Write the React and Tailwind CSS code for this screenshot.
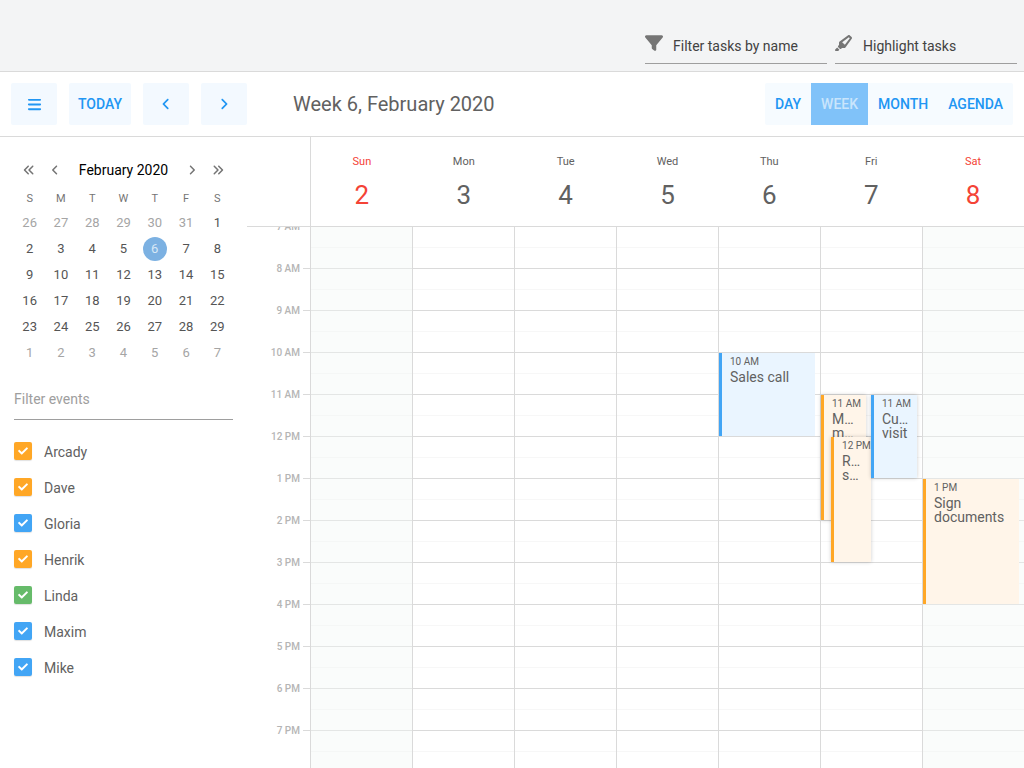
import React from "react";
import {
  FaFilter, FaHighlighter, FaBars, FaAngleLeft, FaAngleRight,
  FaAnglesLeft, FaAnglesRight,
} from "react-icons/fa6";
import { FaCheck } from "react-icons/fa";

const HOUR = 42;
const START = 7;
const HOURS = Array.from({ length: 14 }, (_, i) => START + i);

const DAYS = [
  { name: "Sun", date: 2, weekend: true, events: [] },
  { name: "Mon", date: 3, events: [] },
  { name: "Tue", date: 4, events: [] },
  { name: "Wed", date: 5, events: [] },
  {
    name: "Thu", date: 6,
    events: [{ time: "10 AM", lines: ["Sales call"], from: 10, to: 12, left: 0, width: 95, color: "blue" }],
  },
  {
    name: "Fri", date: 7,
    events: [
      { time: "11 AM", lines: ["Monthly", "meeting"], from: 11, to: 14, left: 0, width: 45, color: "orange", raised: true },
      { time: "12 PM", lines: ["Release", "summary"], from: 12, to: 15, left: 10, width: 40, color: "orange", raised: true },
      { time: "11 AM", lines: ["Customer", "visit"], from: 11, to: 13, left: 49.5, width: 45.5, color: "blue", raised: true },
    ],
  },
  {
    name: "Sat", date: 8, weekend: true,
    events: [{ time: "1 PM", lines: ["Sign", "documents"], from: 13, to: 16, left: 0, width: 95, color: "orange" }],
  },
];

const WEEKS = [
  [26, 27, 28, 29, 30, 31, 1],
  [2, 3, 4, 5, 6, 7, 8],
  [9, 10, 11, 12, 13, 14, 15],
  [16, 17, 18, 19, 20, 21, 22],
  [23, 24, 25, 26, 27, 28, 29],
  [1, 2, 3, 4, 5, 6, 7],
];

const PEOPLE = [
  ["Arcady", "bg-[#ffa726]"],
  ["Dave", "bg-[#ffa726]"],
  ["Gloria", "bg-[#42a5f5]"],
  ["Henrik", "bg-[#ffa726]"],
  ["Linda", "bg-[#66bb6a]"],
  ["Maxim", "bg-[#42a5f5]"],
  ["Mike", "bg-[#42a5f5]"],
];

const EVENT_COLORS = {
  blue: "border-[#42a5f5] bg-[#eaf5ff]",
  orange: "border-[#ffa726] bg-[#fff5e9]",
};

function hourLabel(h) {
  return h < 12 ? `${h} AM` : `${h === 12 ? 12 : h - 12} PM`;
}

function TopField({ icon, label }) {
  return (
    <label className="flex h-9 w-[182px] items-center gap-2 border-b border-[#9e9e9e]">
      <span className="w-5 shrink-0 pb-1.5 text-lg text-[#757575]">{icon}</span>
      <input
        type="text"
        aria-label={label}
        placeholder={label}
        className="w-full min-w-0 bg-transparent text-sm text-[#424242] outline-none placeholder:text-[#424242]"
      />
    </label>
  );
}

function ToolButton({ label, children }) {
  return (
    <button
      type="button"
      aria-label={label}
      className="flex h-[42px] w-[46px] items-center justify-center rounded-xs bg-[#f3f9ff] text-[#2196f3]"
    >
      {children}
    </button>
  );
}

function MiniCalendar() {
  return (
    <section className="px-3.5">
      <div className="flex h-6 items-center justify-between px-[9px] text-[#757575]">
        <div className="flex items-center gap-3.5">
          <button type="button" aria-label="Previous year"><FaAnglesLeft className="size-3" /></button>
          <button type="button" aria-label="Previous month"><FaAngleLeft className="size-3" /></button>
        </div>
        <h2 className="text-sm text-black">February 2020</h2>
        <div className="flex items-center gap-3.5">
          <button type="button" aria-label="Next month"><FaAngleRight className="size-3" /></button>
          <button type="button" aria-label="Next year"><FaAnglesRight className="size-3" /></button>
        </div>
      </div>
      <table className="mt-[7px] w-full table-fixed text-center text-[13px] text-[#555555]">
        <thead>
          <tr className="h-[21px] text-[11px] text-[#757575]">
            {["S", "M", "T", "W", "T", "F", "S"].map((d, i) => (
              <th key={i} className="font-normal">{d}</th>
            ))}
          </tr>
        </thead>
        <tbody>
          {WEEKS.map((week, w) => (
            <tr key={w} className="h-[26px]">
              {week.map((d, i) => {
                const other = (w === 0 && d > 7) || w === 5;
                const selected = w === 1 && d === 6;
                return (
                  <td key={i} className={other ? "p-0 text-[#a5a5a5]" : "p-0"}>
                    {selected ? (
                      <span className="mx-auto flex size-6 items-center justify-center rounded-full bg-[#7cb1e2] text-[#d8e8f6]">{d}</span>
                    ) : d}
                  </td>
                );
              })}
            </tr>
          ))}
        </tbody>
      </table>
    </section>
  );
}

function Sidebar() {
  return (
    <aside className="w-[247px] shrink-0 overflow-hidden pt-[21px]">
      <MiniCalendar />
      <div className="px-3.5">
        <input
          type="text"
          aria-label="Filter events"
          placeholder="Filter events"
          className="mt-3 h-[42px] w-full border-b border-[#9e9e9e] text-sm outline-none placeholder:text-[#9e9e9e]"
        />
        <ul className="mt-3.5">
          {PEOPLE.map(([name, color]) => (
            <li key={name}>
              <label className="flex h-9 items-center gap-3 text-sm text-[#616161]">
                <span className="mb-0.5 grid size-[18px] place-items-center">
                  <input
                    type="checkbox"
                    defaultChecked
                    className={`col-start-1 row-start-1 size-[18px] appearance-none rounded-xs shadow-[0_1px_1px_rgba(0,0,0,0.12)] ${color}`}
                  />
                  <FaCheck className="pointer-events-none col-start-1 row-start-1 size-2.5 text-white" />
                </span>
                {name}
              </label>
            </li>
          ))}
        </ul>
      </div>
    </aside>
  );
}

function Event({ event }) {
  return (
    <article
      className={`absolute overflow-hidden border-l-3 pt-[3px] pl-2 text-[#616161] ${EVENT_COLORS[event.color]} ${event.raised ? "shadow-[0_0_4px_rgba(0,0,0,0.2)]" : ""}`}
      style={{
        top: (event.from - START) * HOUR,
        height: (event.to - event.from) * HOUR - 1,
        left: `${event.left}%`,
        width: `${event.width}%`,
      }}
    >
      <p className="text-[10px] leading-3 whitespace-nowrap">{event.time}</p>
      <div className="mt-0.5 pr-2 text-sm leading-3.5">
        {event.lines.map((l) => (
          <p key={l} className="-mb-1 truncate pb-1">{l}</p>
        ))}
      </div>
    </article>
  );
}

function WeekView() {
  return (
    <main className="flex min-w-0 flex-1 flex-col">
      <div className="flex h-[90px] shrink-0 border-b border-[#dadada]">
        <div className="box-content w-[63px] shrink-0 border-r border-[#dadada]" />
        <div className="grid flex-1 grid-cols-7">
          {DAYS.map((d) => (
            <div key={d.name} className={`flex flex-col items-center pt-[17px] ${d.weekend ? "text-[#f44336]" : "text-[#616161]"}`}>
              <span className="text-[11px] leading-4">{d.name}</span>
              <span className="mt-[9px] text-[26px] leading-8">{d.date}</span>
            </div>
          ))}
        </div>
      </div>
      <div className="flex min-h-0 flex-1 overflow-hidden">
        <div className="w-[63px] shrink-0">
          {HOURS.map((h) => (
            <div key={h} className="-mt-2 mb-2 flex h-[42px] items-start justify-end gap-[3px]">
              <span className="text-[10px] leading-4 font-medium text-[#b5b5b5]">{hourLabel(h)}</span>
              <span className="mt-[7px] h-px w-[7px] bg-[#dadada]" />
            </div>
          ))}
        </div>
        <div className="grid flex-1 grid-cols-7">
          {DAYS.map((d) => (
            <div key={d.name} className={`relative border-l border-[#dadada] ${d.weekend ? "bg-[#fafcfb]" : ""}`}>
              {HOURS.map((h) => (
                <div key={h} className={`h-[42px] border-b ${d.weekend ? "border-[#e4e6e5]" : "border-[#dadada]"}`}>
                  <div className={`h-[21px] border-b ${d.weekend ? "border-[#f5f7f6]" : "border-[#f7f7f7]"}`} />
                </div>
              ))}
              {d.events.map((e, i) => <Event key={i} event={e} />)}
            </div>
          ))}
        </div>
      </div>
    </main>
  );
}

export default function App() {
  return (
    <div className="flex h-screen flex-col overflow-hidden bg-white font-['Roboto',sans-serif] text-[#616161]">
      <header className="flex h-[72px] shrink-0 items-end justify-end gap-2 border-b border-[#dadada] bg-[#f3f4f5] pr-[7px] pb-[7px]">
        <TopField icon={<FaFilter />} label="Filter tasks by name" />
        <TopField icon={<FaHighlighter />} label="Highlight tasks" />
      </header>
      <div className="flex h-[65px] shrink-0 items-center justify-between border-b border-[#dadada] px-[11px]">
        <div className="flex items-center gap-3">
          <ToolButton label="Toggle sidebar"><FaBars className="size-[15px]" /></ToolButton>
          <button type="button" className="h-[42px] w-[62px] rounded-xs bg-[#f3f9ff] text-center text-sm font-medium text-[#2196f3]">TODAY</button>
          <ToolButton label="Previous week"><FaAngleLeft className="size-3.5" /></ToolButton>
          <ToolButton label="Next week"><FaAngleRight className="size-3.5" /></ToolButton>
          <h1 className="pl-[34px] text-xl">Week 6, February 2020</h1>
        </div>
        <div className="flex h-[42px] overflow-hidden rounded-xs bg-[#f6fbff] text-sm font-medium text-[#2196f3]">
          <button type="button" className="px-2.5">DAY</button>
          <button type="button" aria-pressed="true" className="bg-[#80c2f9] px-2.5 text-[#c9e5fc]">WEEK</button>
          <button type="button" className="px-2.5">MONTH</button>
          <button type="button" className="px-2.5">AGENDA</button>
        </div>
      </div>
      <div className="flex min-h-0 flex-1">
        <Sidebar />
        <WeekView />
      </div>
    </div>
  );
}
